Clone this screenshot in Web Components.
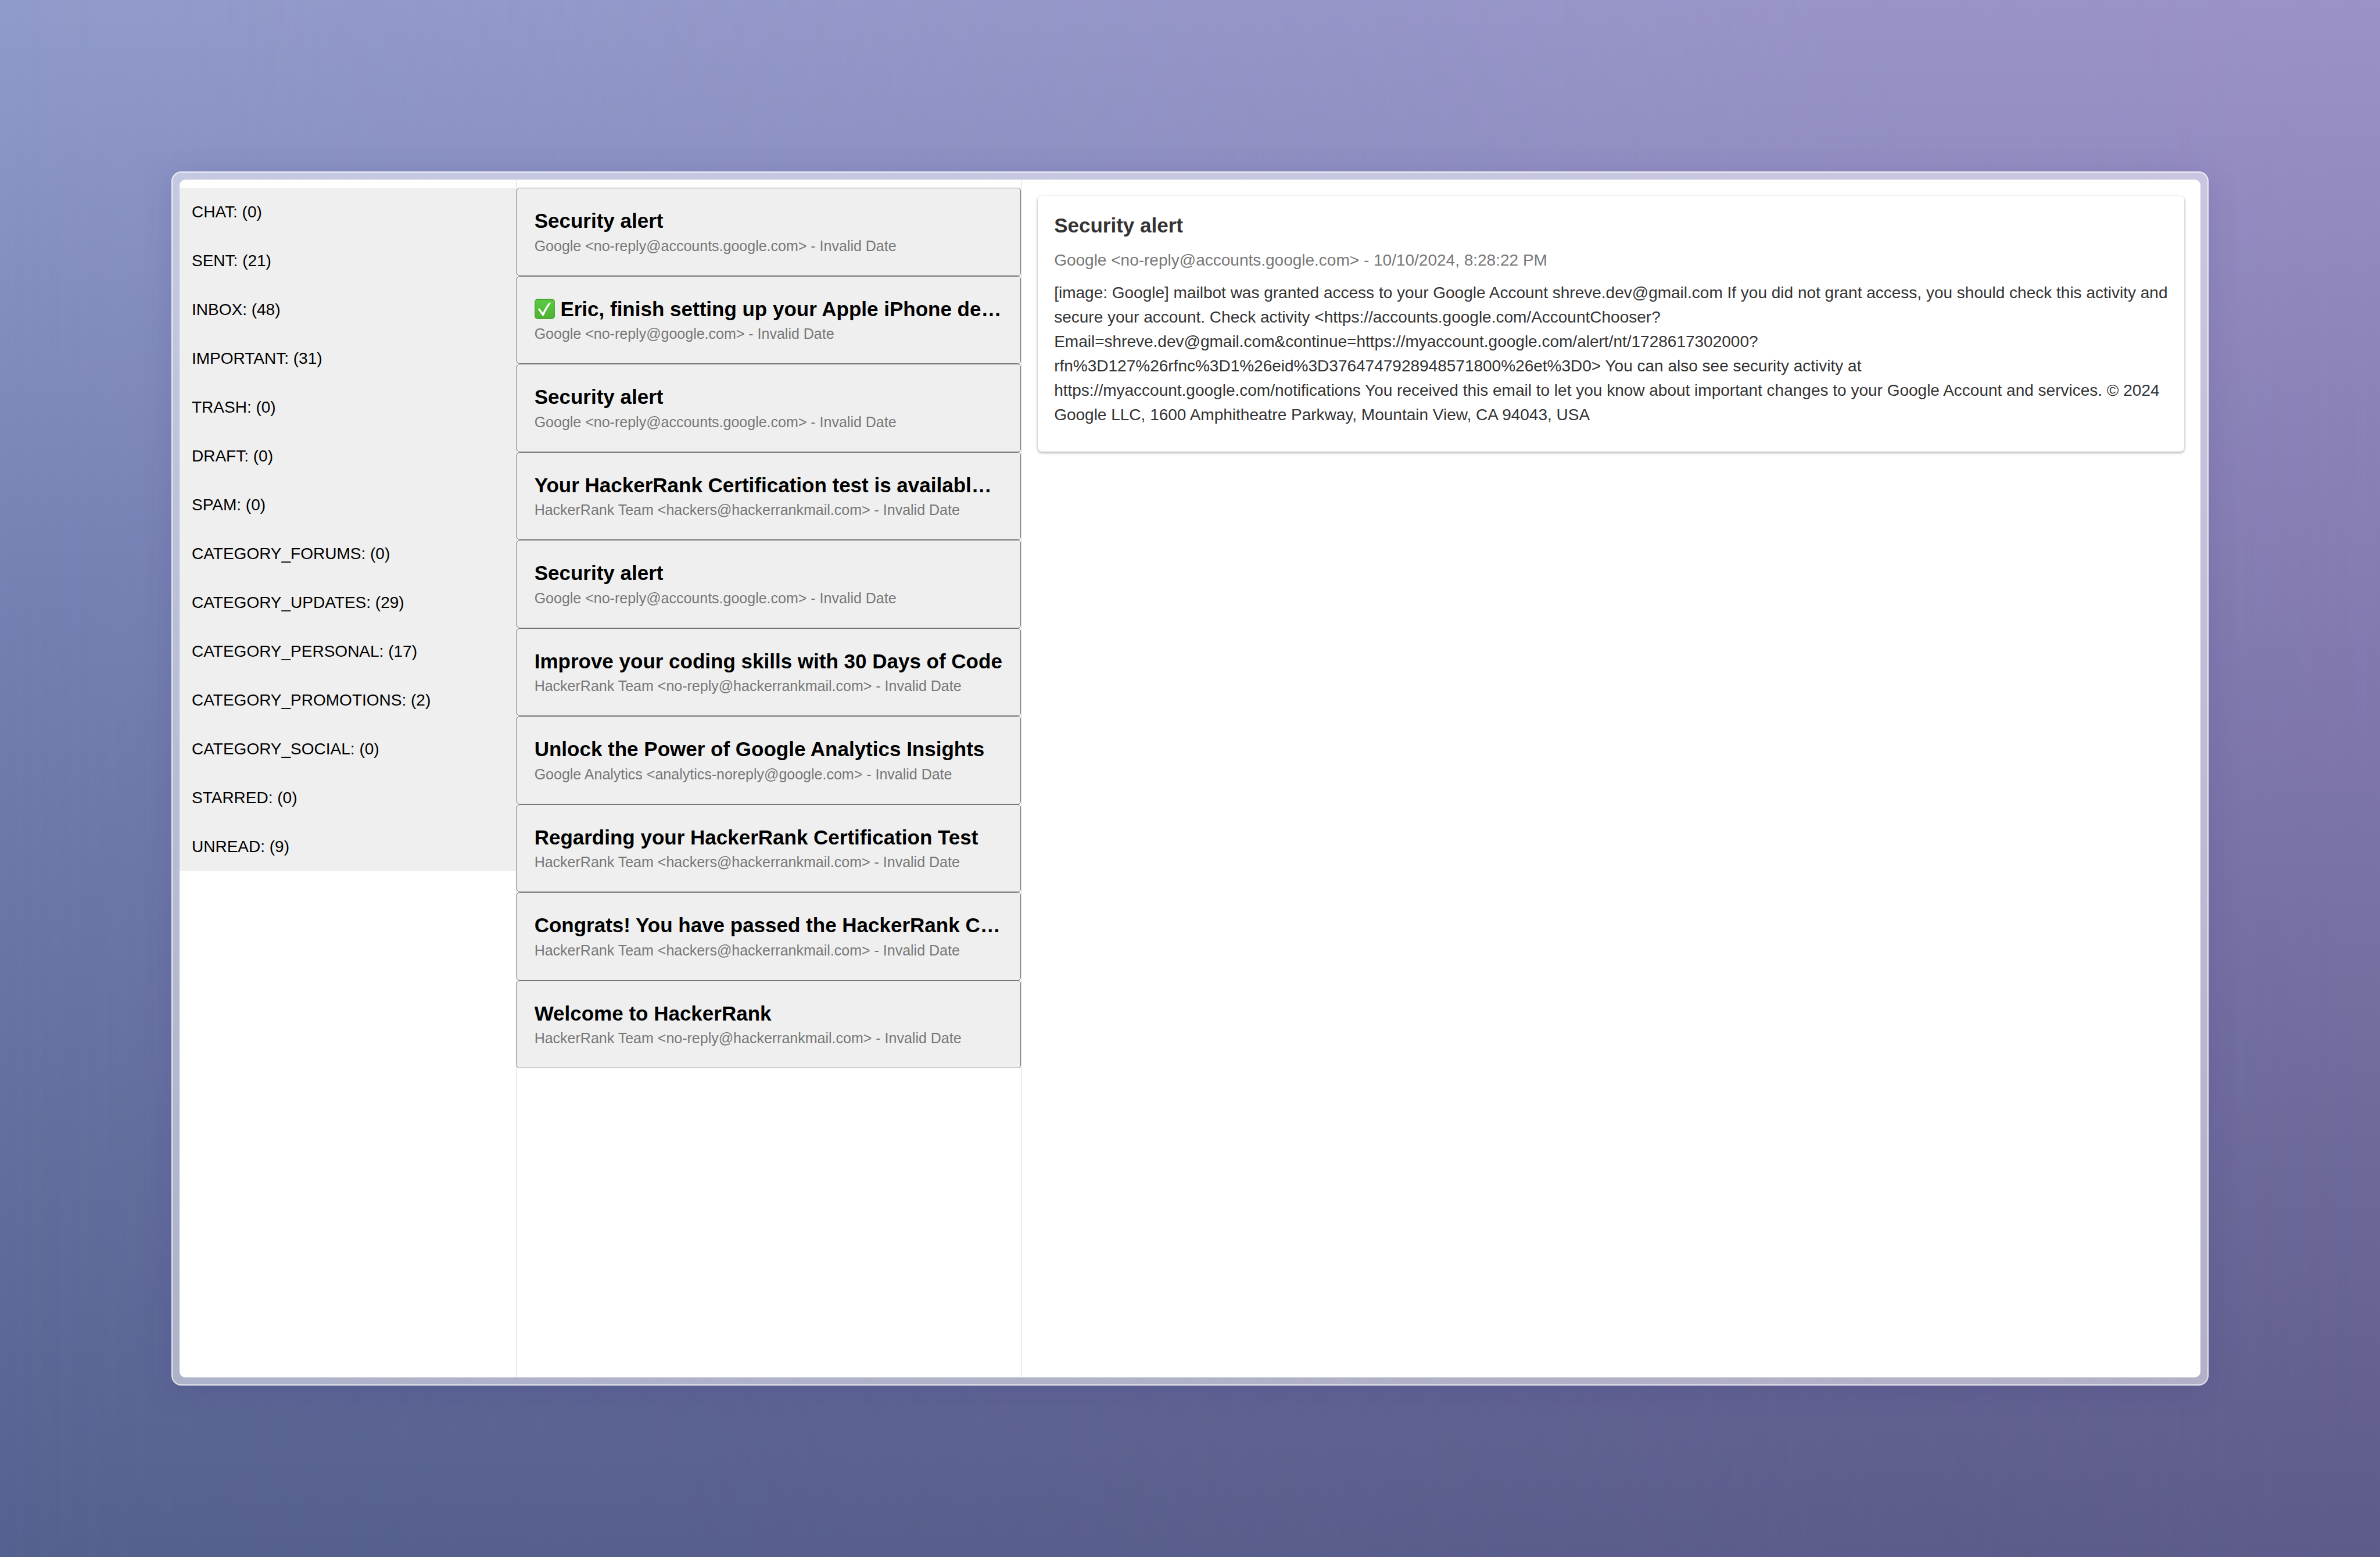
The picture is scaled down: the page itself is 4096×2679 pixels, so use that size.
<!DOCTYPE html>
<html lang="en">
<head>
<meta charset="utf-8">
<title>Mailbot</title>
<style>
html, body { height: 100%; }
body { margin: 0; font: 28px/1.5 "Liberation Sans", Arial, Helvetica, sans-serif; color: #000; }
</style>
</head>
<body>
<mail-app></mail-app>
<script>
const define = (name, html, setup) => {
  const template = document.createElement('template');
  template.innerHTML = html;
  customElements.define(name, class extends HTMLElement {
    constructor() {
      super();
      this.attachShadow({ mode: 'open' }).append(template.content.cloneNode(true));
    }
    connectedCallback() { if (setup) setup(this.shadowRoot, this); }
  });
};

define('check-icon', `
<style>
:host { display: inline-block; vertical-align: -5px; width: 35px; height: 35px; }
svg { display: block; width: 100%; height: 100%; }
</style>
<svg viewBox="0 0 44 44" role="img" aria-label="check mark">
  <defs>
    <linearGradient id="g" x1="0" y1="0" x2="0" y2="1">
      <stop offset="0" stop-color="#3f9a2b"/><stop offset=".09" stop-color="#5cc842"/>
      <stop offset=".5" stop-color="#55bd3b"/><stop offset="1" stop-color="#50b036"/>
    </linearGradient>
  </defs>
  <rect width="44" height="44" rx="7" fill="url(#g)"/>
  <rect x="1" y="1" width="42" height="42" rx="6" fill="none" stroke="#46a030" stroke-opacity=".5" stroke-width="2"/>
  <path d="M8 23.500c-.4-2.400 2.600-3.900 4.200-1.200l5.600 8.200C22 21.500 26.500 14 31.500 8.800c1.300-1.300 4.200-.8 3.100.9-5.500 8.300-10.300 16.500-14.300 25.700-.7 1.600-3.300 1.700-4.100.2z" fill="#fff"/>
</svg>`);

define('label-button', `
<style>
:host { display: block; }
button { display: block; width: 100%; border: 0; margin: 0; padding: 21px; background: #efefef;
  font: inherit; line-height: 42px; color: #000; text-align: left; white-space: nowrap; cursor: pointer; }
</style>
<button type="button"><slot></slot></button>`);

define('mail-item', `
<style>
:host { display: block; }
button { display: block; box-sizing: border-box; width: 100%; margin: 0; padding: 30px 28px 35px 30px;
  border: 1px solid #767676; border-radius: 5px; background: #efefef; font: inherit; color: #000;
  text-align: left; cursor: pointer; }
.subject, .from { display: block; overflow: hidden; white-space: nowrap; }
.subject { font-size: 35px; font-weight: bold; line-height: 1.5; }
.from { font-size: 25px; line-height: 32px; color: #777; }
</style>
<button type="button">
  <span class="subject"><slot></slot></span>
  <span class="from"><slot name="from"></slot></span>
</button>`);

define('mail-message', `
<style>
:host { display: block; }
article { padding: 28px 28px 42px; border-radius: 7px; background: #fff; color: #333;
  box-shadow: 0 2px 5px rgba(0,0,0,.12), 0 2px 4px rgba(0,0,0,.24); }
h2 { margin: 0 0 16px; font-size: 35px; line-height: 46px; }
.meta { margin: 0 0 14px; color: #777; }
.body { margin: 0; }
</style>
<article>
  <h2><slot name="subject"></slot></h2>
  <p class="meta"><slot name="meta"></slot></p>
  <p class="body"><slot></slot></p>
</article>`);

define('mail-frame', `
<style>
:host { display: block; box-sizing: border-box; padding: 12px; border: 2px solid rgba(255,255,255,.7);
  border-radius: 17px; background: rgba(255,255,255,.5); box-shadow: 0 8px 52px rgba(60,50,130,.17); }
div { display: grid; grid-template-columns: minmax(0,2fr) minmax(0,3fr) minmax(0,7fr); height: 100%;
  border-radius: 10px; background: #fff; overflow: hidden; }
</style>
<div><slot></slot></div>`);

const labels = [['CHAT', 0], ['SENT', 21], ['INBOX', 48], ['IMPORTANT', 31], ['TRASH', 0], ['DRAFT', 0], ['SPAM', 0],
  ['CATEGORY_FORUMS', 0], ['CATEGORY_UPDATES', 29], ['CATEGORY_PERSONAL', 17], ['CATEGORY_PROMOTIONS', 2],
  ['CATEGORY_SOCIAL', 0], ['STARRED', 0], ['UNREAD', 9]];
const accounts = 'Google <no-reply@accounts.google.com>';
const hackers = 'HackerRank Team <hackers@hackerrankmail.com>';
const noReply = 'HackerRank Team <no-reply@hackerrankmail.com>';
const mails = [
  ['Security alert', accounts],
  ['Eric, finish setting up your Apple iPhone de…', 'Google <no-reply@google.com>', true],
  ['Security alert', accounts],
  ['Your HackerRank Certification test is availabl…', hackers],
  ['Security alert', accounts],
  ['Improve your coding skills with 30 Days of Code', noReply],
  ['Unlock the Power of Google Analytics Insights', 'Google Analytics <analytics-noreply@google.com>'],
  ['Regarding your HackerRank Certification Test', hackers],
  ['Congrats! You have passed the HackerRank C…', hackers],
  ['Welcome to HackerRank', noReply],
];

define('mail-app', `
<style>
:host { display: flex; box-sizing: border-box; min-height: 100%; padding: 295px; position: relative; isolation: isolate;
  background: linear-gradient(to bottom, #919bcb, #7480b1 40%, #55618f); }
:host::before { content: ""; position: absolute; inset: 0; z-index: -1;
  background: linear-gradient(to bottom, #9b92c7, #8078ad 45%, #5d5b8a);
  -webkit-mask: linear-gradient(to right, transparent, #000); mask: linear-gradient(to right, transparent, #000); }
mail-frame { flex: 1; }
nav, section { padding-top: 14px; border-right: 1px solid #ddd; }
main { padding: 28px; }
</style>
<mail-frame>
  <nav aria-label="Labels"></nav>
  <section aria-label="Messages"></section>
  <main>
    <mail-message>
      <span slot="subject">Security alert</span>
      <span slot="meta">Google &lt;no-reply@accounts.google.com&gt; - 10/10/2024, 8:28:22 PM</span>[image: Google] mailbot was granted access to your Google Account shreve.dev@gmail.com If you did not grant access, you should check this activity and secure your account. Check activity &lt;https://accounts.google.com/AccountChooser?Email=shreve.dev@gmail.com&amp;continue=https://myaccount.google.com/alert/nt/1728617302000?rfn%3D127%26rfnc%3D1%26eid%3D3764747928948571800%26et%3D0&gt; You can also see security activity at https://myaccount.google.com/notifications You received this email to let you know about important changes to your Google Account and services. © 2024 Google LLC, 1600 Amphitheatre Parkway, Mountain View, CA 94043, USA</mail-message>
  </main>
</mail-frame>`, root => {
  const nav = root.querySelector('nav');
  for (const [name, count] of labels) {
    const item = document.createElement('label-button');
    item.textContent = `${name}: (${count})`;
    nav.append(item);
  }
  const list = root.querySelector('section');
  for (const [subject, from, check] of mails) {
    const item = document.createElement('mail-item');
    if (check) item.append(document.createElement('check-icon'), ' ');
    item.append(subject);
    const sender = document.createElement('span');
    sender.slot = 'from';
    sender.textContent = `${from} - Invalid Date`;
    item.append(sender);
    list.append(item);
  }
});
</script>
</body>
</html>
